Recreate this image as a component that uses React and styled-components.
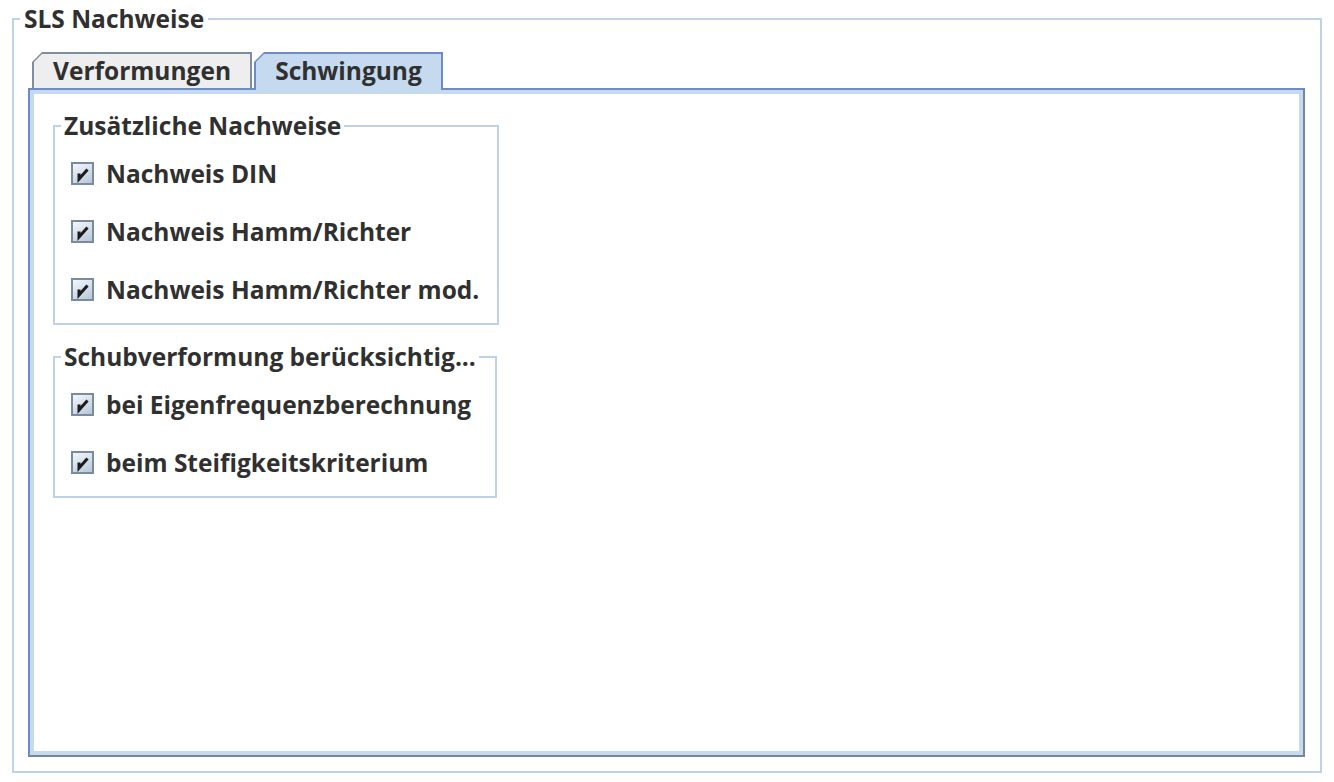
import React from "react";
import styled, { createGlobalStyle } from "styled-components";

const GlobalStyle = createGlobalStyle`
  html, body { margin: 0; padding: 0; background: #ffffff; }
  body { font-family: "Open Sans", "Noto Sans", sans-serif; color: #303030; }
`;

const Page = styled.div`
  padding: 4px 12px 0 12px;
  width: 1334px;
  box-sizing: border-box;
`;

const GroupBox = styled.fieldset`
  margin: 0;
  min-width: 0;
  border: 2px solid #bfd2e7;
  padding: ${(p) => p.$pad || "0"};
  width: ${(p) => p.$width || "auto"};
  box-sizing: border-box;
`;

const Legend = styled.legend`
  font-family: "Open Sans", "Noto Sans", sans-serif;
  font-weight: 700;
  font-size: 24.5px;
  line-height: 30px;
  color: #303030;
  padding: 0 ${(p) => p.$padX || 3}px;
  margin-left: ${(p) => p.$offset ?? 6}px;
  white-space: nowrap;
`;

const TabRow = styled.div`
  display: flex;
  align-items: flex-end;
  height: 36px;
  padding-left: 4px;
`;

const TabShell = styled.div`
  position: relative;
  z-index: ${(p) => (p.$active ? 1 : 0)};
  width: ${(p) => p.$width}px;
  height: ${(p) => (p.$active ? 38 : 36)}px;
  margin-bottom: ${(p) => (p.$active ? -2 : 0)}px;
  margin-left: ${(p) => p.$gap || 0}px;
  box-sizing: border-box;
  padding: 2px 2px 0 2px;
  background: ${(p) => (p.$active ? "#6d8bc6" : "#7f8e9e")};
  clip-path: polygon(10px 0, 100% 0, 100% 100%, 0 100%, 0 10px);
`;

const TabFill = styled.div`
  height: 100%;
  box-sizing: border-box;
  padding-top: 2px;
  background: ${(p) => (p.$active ? "#c6daef" : "#eeeeee")};
  clip-path: polygon(8px 0, 100% 0, 100% 100%, 0 100%, 0 8px);
  font-weight: 700;
  font-size: 24.5px;
  line-height: 30px;
  text-align: center;
  color: #303030;
  white-space: nowrap;
`;

const Panel = styled.div`
  height: 669px;
  box-sizing: border-box;
  border: 2px solid;
  border-color: #6d8bc6 #788797 #788797 #6d8bc6;
  padding: 4px;
  background: #c6daef;
`;

const PanelBody = styled.div`
  height: 100%;
  background: #ffffff;
  padding: 17px 0 0 19px;
  box-sizing: border-box;
  display: flex;
  flex-direction: column;
  align-items: flex-start;
  gap: 17px;
`;

const Rows = styled.div`
  display: flex;
  flex-direction: column;
  gap: 28px;
  padding: 18px 0 18px 16px;
`;

const CheckRow = styled.label`
  display: flex;
  align-items: center;
  gap: 12px;
  height: 30px;
  font-weight: 700;
  font-size: 24.5px;
  line-height: 30px;
  color: #303030;
  white-space: nowrap;
`;

const Box = styled.span`
  width: 23px;
  height: 23px;
  box-sizing: border-box;
  border: 2px solid #7b8b9e;
  background: linear-gradient(150deg, #f4f7fb 0%, #d6e0ec 50%, #b7c6d8 100%);
  display: flex;
  align-items: center;
  justify-content: center;
  flex: none;
  margin-top: -1px;
`;

function CheckBox({ label }) {
  return (
    <CheckRow>
      <Box>
        <svg width="19" height="19" viewBox="0 0 19 19">
          <path d="M6 9.5 V15 L14.5 5.5" fill="none" stroke="#1c1c1c" strokeWidth="3" strokeLinejoin="miter" />
        </svg>
      </Box>
      {label}
    </CheckRow>
  );
}

export default function App() {
  return (
    <Page>
      <GlobalStyle />
      <GroupBox $pad="18px 15px 14px 14px">
        <Legend $padX={4} $offset={-8}>SLS Nachweise</Legend>
        <TabRow>
          <TabShell $width={220}>
            <TabFill>Verformungen</TabFill>
          </TabShell>
          <TabShell $active $width={189} $gap={2}>
            <TabFill $active>Schwingung</TabFill>
          </TabShell>
        </TabRow>
        <Panel>
          <PanelBody>
            <GroupBox $width="446px">
              <Legend>Zusätzliche Nachweise</Legend>
              <Rows>
                <CheckBox label="Nachweis DIN" />
                <CheckBox label="Nachweis Hamm/Richter" />
                <CheckBox label="Nachweis Hamm/Richter mod." />
              </Rows>
            </GroupBox>
            <GroupBox $width="444px">
              <Legend>Schubverformung berücksichtig...</Legend>
              <Rows>
                <CheckBox label="bei Eigenfrequenzberechnung" />
                <CheckBox label="beim Steifigkeitskriterium" />
              </Rows>
            </GroupBox>
          </PanelBody>
        </Panel>
      </GroupBox>
    </Page>
  );
}
